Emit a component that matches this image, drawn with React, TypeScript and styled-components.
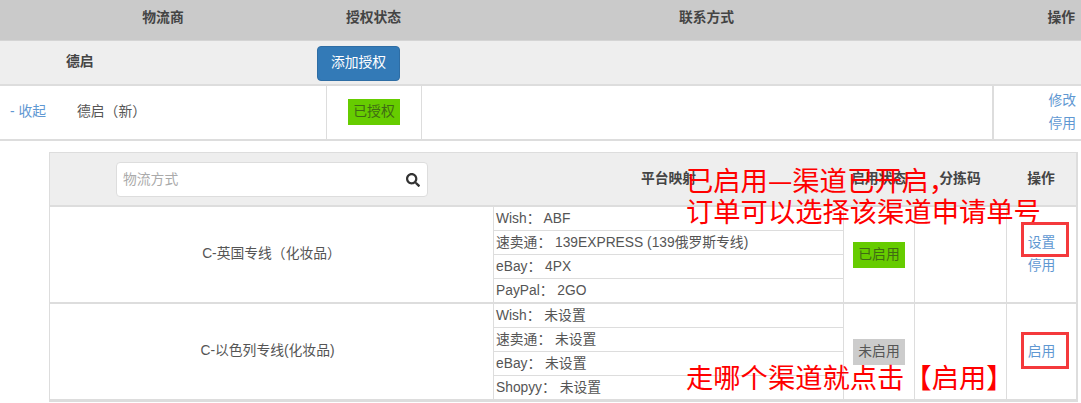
import React from "react";
import styled, { createGlobalStyle } from "styled-components";
import { FaSearch } from "react-icons/fa";

const Global = createGlobalStyle`
  html, body { margin: 0; padding: 0; background: #fff; }
  * { box-sizing: border-box; }
  body {
    font-family: "Liberation Sans", "Noto Sans CJK SC", sans-serif;
    font-size: 13.8px;
    line-height: 20px;
    color: #555;
  }
`;

const Page = styled.div`
  position: relative;
  width: 1081px;
  height: 403px;
  overflow: hidden;
`;

const mainColumns = "326px 95px 571px 89px";
const subColumns = "444px 349px 71px 92px 72px";

const HeadRow = styled.div`
  display: grid;
  grid-template-columns: ${mainColumns};
  height: 41px;
  background: #cacaca;
  border-bottom: 1px solid #d4d4d4;
`;

const HeadCell = styled.div<{ $right?: boolean }>`
  display: flex;
  align-items: center;
  justify-content: ${(p) => (p.$right ? "flex-end" : "center")};
  padding-right: ${(p) => (p.$right ? "6px" : "0")};
  padding-bottom: 4px;
  font-weight: 700;
  color: #444;
`;

const GroupRow = styled.div`
  display: flex;
  align-items: center;
  height: 45px;
  padding: 0 0 2px 66px;
  background: #eee;
  border-bottom: 2px solid #ddd;
`;

const GroupName = styled.strong`
  width: 251px;
  color: #444;
`;

const PrimaryButton = styled.button`
  width: 83px;
  height: 35px;
  margin-top: 3px;
  border: 1px solid #2e6da4;
  border-radius: 4px;
  background: #337ab7;
  color: #fff;
  font: inherit;
  padding: 0;
`;

const AccountRow = styled.div`
  display: grid;
  grid-template-columns: ${mainColumns};
  height: 55px;
  border-bottom: 2px solid #ddd;
`;

const AccountName = styled.div`
  display: flex;
  align-items: center;
  gap: 31px;
  padding: 0 0 2px 10px;
`;

const CenterCell = styled.div<{ $line?: boolean }>`
  display: flex;
  align-items: center;
  justify-content: center;
  padding-bottom: 2px;
  border-left: ${(p) => (p.$line ? "1px solid #ddd" : "0")};
`;

const ActionStack = styled.div`
  display: flex;
  flex-direction: column;
  align-items: flex-end;
  justify-content: center;
  gap: 3px;
  padding-right: 5px;
  border-left: 2px solid #ddd;
`;

const Link = styled.a`
  color: #5f98d2;
`;

const Badge = styled.span<{ $off?: boolean }>`
  display: inline-block;
  height: 26px;
  padding: 3px 5px;
  background: ${(p) => (p.$off ? "#cccccc" : "#66cc00")};
  color: ${(p) => (p.$off ? "#555" : "#3f6b14")};
`;

const SubTable = styled.section`
  width: 1029px;
  margin: 11px 0 0 49px;
  border: 1px solid #ddd;
  border-right-width: 2px;
`;

const SubHead = styled.div`
  display: grid;
  grid-template-columns: ${subColumns};
  height: 54px;
  background: #eee;
  border-bottom: 2px solid #ddd;
`;

const SearchCell = styled.div`
  display: flex;
  align-items: center;
  padding: 1px 0 0 66px;
`;

const SearchBox = styled.div`
  display: flex;
  align-items: center;
  justify-content: space-between;
  width: 312px;
  height: 35px;
  padding: 0 7px 0 6px;
  background: #fff;
  border: 1px solid #ddd;
  border-radius: 4px;
  color: #aaa;
`;

const SearchIcon = styled(FaSearch)`
  width: 14px;
  height: 14px;
  color: #333;
`;

const SubHeadCell = styled.div<{ $end?: boolean }>`
  display: flex;
  align-items: center;
  justify-content: center;
  padding-right: ${(p) => (p.$end ? "2px" : "0")};
  font-weight: 700;
  color: #444;
  white-space: nowrap;
`;

const ChannelRow = styled.div`
  display: grid;
  grid-template-columns: ${subColumns};
  height: 97px;
  border-bottom: 2px solid #ddd;
`;

const ChannelName = styled.div<{ $inset: number }>`
  display: flex;
  align-items: center;
  justify-content: center;
  padding: 0 ${(p) => p.$inset}px 2px 0;
  border-right: 1px solid #ddd;
`;

const Mappings = styled.div`
  display: flex;
  flex-direction: column;
`;

const Mapping = styled.div`
  flex: 1;
  display: flex;
  align-items: center;
  padding-left: 2px;
  white-space: pre;
  border-bottom: 1px solid #ddd;
  &:last-child { border-bottom: 0; }
`;

const ChannelCell = styled.div<{ $end?: boolean }>`
  display: flex;
  flex-direction: column;
  align-items: center;
  justify-content: center;
  gap: 3px;
  padding-right: ${(p) => (p.$end ? "2px" : "0")};
  border-left: 1px solid #ddd;
`;

const Note = styled.div<{ $top: number }>`
  position: absolute;
  left: 686px;
  top: ${(p) => p.$top}px;
  font-family: "Noto Sans CJK SC", sans-serif;
  font-size: 27.3px;
  line-height: 32px;
  color: #f00;
  white-space: nowrap;
`;

const Highlight = styled.div<{ $top: number; $h: number }>`
  position: absolute;
  left: 1021px;
  top: ${(p) => p.$top}px;
  width: 48px;
  height: ${(p) => p.$h}px;
  border: 3px solid #f4393c;
`;

const rows = [
  {
    name: "C-英国专线（化妆品）",
    inset: 0,
    maps: ["Wish： ABF", "速卖通： 139EXPRESS (139俄罗斯专线)", "eBay： 4PX", "PayPal： 2GO"],
    on: true,
  },
  {
    name: "C-以色列专线(化妆品)",
    inset: 8,
    maps: ["Wish： 未设置", "速卖通： 未设置", "eBay： 未设置", "Shopyy： 未设置"],
    on: false,
  },
];

export default function App() {
  return (
    <Page>
      <Global />
      <HeadRow>
        <HeadCell>物流商</HeadCell>
        <HeadCell>授权状态</HeadCell>
        <HeadCell>联系方式</HeadCell>
        <HeadCell $right>操作</HeadCell>
      </HeadRow>
      <GroupRow>
        <GroupName>德启</GroupName>
        <PrimaryButton>添加授权</PrimaryButton>
      </GroupRow>
      <AccountRow>
        <AccountName>
          <Link>- 收起</Link>
          <span>德启（新）</span>
        </AccountName>
        <CenterCell $line>
          <Badge>已授权</Badge>
        </CenterCell>
        <CenterCell $line />
        <ActionStack>
          <Link>修改</Link>
          <Link>停用</Link>
        </ActionStack>
      </AccountRow>
      <SubTable>
        <SubHead>
          <SearchCell>
            <SearchBox>
              物流方式
              <SearchIcon />
            </SearchBox>
          </SearchCell>
          <SubHeadCell>平台映射</SubHeadCell>
          <SubHeadCell>启用状态</SubHeadCell>
          <SubHeadCell>分拣码</SubHeadCell>
          <SubHeadCell $end>操作</SubHeadCell>
        </SubHead>
        {rows.map((r) => (
          <ChannelRow key={r.name}>
            <ChannelName $inset={r.inset}>{r.name}</ChannelName>
            <Mappings>
              {r.maps.map((m) => (
                <Mapping key={m}>{m}</Mapping>
              ))}
            </Mappings>
            <ChannelCell>
              <Badge $off={!r.on}>{r.on ? "已启用" : "未启用"}</Badge>
            </ChannelCell>
            <ChannelCell />
            <ChannelCell $end>
              {r.on ? (
                <>
                  <Link>设置</Link>
                  <Link>停用</Link>
                </>
              ) : (
                <Link>启用</Link>
              )}
            </ChannelCell>
          </ChannelRow>
        ))}
      </SubTable>
      <Note $top={163}>已启用—渠道已开启，</Note>
      <Note $top={194}>订单可以选择该渠道申请单号</Note>
      <Note $top={360}>走哪个渠道就点击【启用】</Note>
      <Highlight $top={222} $h={35} />
      <Highlight $top={332} $h={37} />
    </Page>
  );
}
